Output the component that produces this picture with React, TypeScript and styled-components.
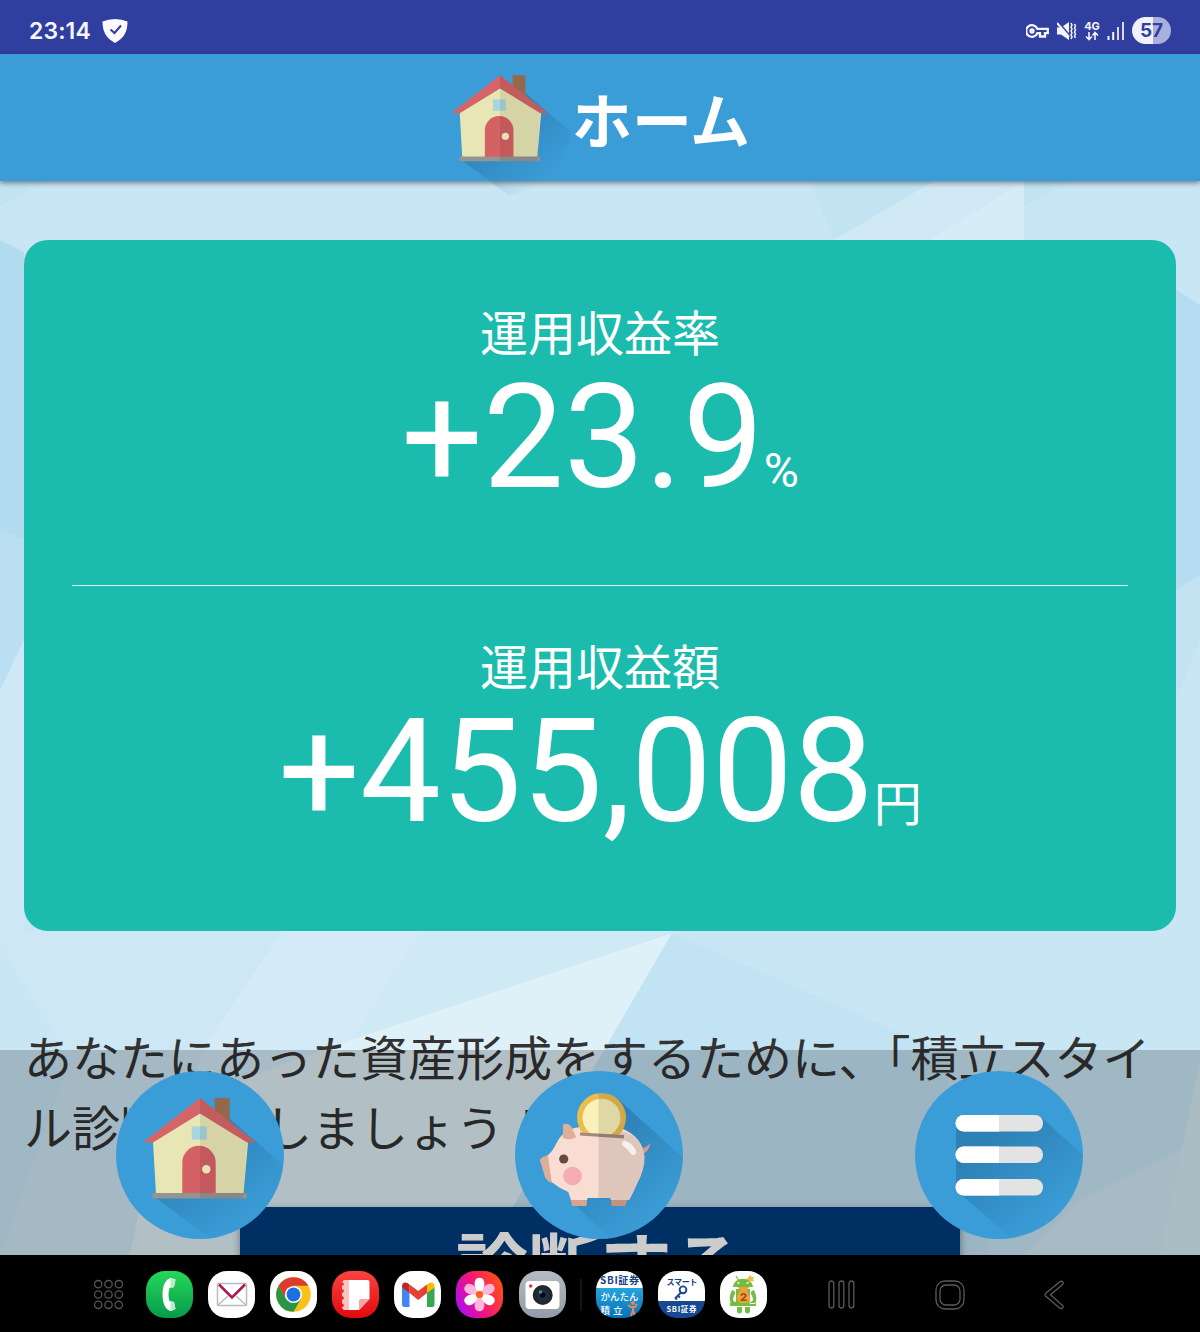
import React from 'react';
import styled, { createGlobalStyle } from 'styled-components';

const GlobalStyle = createGlobalStyle`
	* {
		box-sizing: border-box;
	}
	body {
		margin: 0;
		background: #000;
		font-family: Roboto, 'Noto Sans CJK JP', sans-serif;
	}
`;

const Screen = styled.div`
	display: flex;
	flex-direction: column;
	width: 1200px;
	height: 1332px;
	overflow: hidden;
`;

const StatusBar = styled.div`
	display: flex;
	align-items: center;
	justify-content: space-between;
	flex: none;
	height: 54px;
	padding: 7px 29px 0 29px;
	background: #303f9f;
	color: #f4f5fd;
`;

const StatusGroup = styled.div<{ $gap: number }>`
	display: flex;
	align-items: center;
	gap: ${({ $gap }) => $gap}px;
`;

const Clock = styled.span`
	font: 600 23px/28px Inter, sans-serif;
	letter-spacing: 0.1px;
`;

const Network = styled.div`
	display: flex;
	flex-direction: column;
	align-items: center;
	width: 16px;
	font: 700 11px/10px Inter, sans-serif;
`;

const Battery = styled.span`
	display: flex;
	align-items: center;
	justify-content: center;
	width: 39px;
	height: 27px;
	border-radius: 14px;
	background: linear-gradient(90deg, #f0f1fb 55%, #aab0dc 55%);
	color: #303f9f;
	font: 700 19px/27px Inter, sans-serif;
`;

const Header = styled.header`
	display: flex;
	align-items: center;
	justify-content: center;
	flex: none;
	position: relative;
	z-index: 2;
	height: 127px;
	padding-right: 22px;
	background: #3b9dd7;
	box-shadow: 0 2px 5px rgba(0, 0, 0, 0.45);
	color: #fff;
	svg {
		margin-top: 13px;
	}
`;

const HeaderTitle = styled.h1`
	margin: 0;
	font: 700 60px/84px 'Noto Sans CJK JP', sans-serif;
`;

const Main = styled.main`
	flex: 1;
	position: relative;
	overflow: hidden;
	padding: 59px 24px 0;
`;

const Backdrop = styled.svg`
	position: absolute;
	inset: 0;
	z-index: -1;
`;

const Card = styled.section`
	height: 691px;
	padding: 0 48px;
	border-radius: 24px;
	background: #1bbbad;
	color: #fff;
`;

const Result = styled.div`
	display: flex;
	flex-direction: column;
	align-items: center;
	height: 345px;
	padding-top: 56px;
	& + & {
		height: 346px;
		padding-top: 44px;
		border-top: 1px solid #e3f6f4;
	}
`;

const ResultLabel = styled.div`
	font: 400 48px/69px 'Noto Sans CJK JP', sans-serif;
`;

const ResultValue = styled.div`
	display: flex;
	align-items: baseline;
	font-size: 144px;
	line-height: 146px;
`;

const Unit = styled.small`
	font-size: 48px;
	line-height: 70px;
`;

const Lead = styled.p`
	margin: 89px 0 47px;
	color: #333;
	font: 400 48px/70px 'Noto Sans CJK JP', sans-serif;
`;

const DiagnoseButton = styled.button`
	display: block;
	width: 720px;
	height: 110px;
	margin: 0 auto;
	padding: 0;
	border: 0;
	background: #003d7c;
	box-shadow: 0 3px 8px rgba(0, 0, 0, 0.4);
	color: #fff;
	font: 700 72px/104px 'Noto Sans CJK JP', sans-serif;
`;

const BottomNav = styled.nav`
	position: absolute;
	right: 0;
	bottom: 0;
	left: 0;
	display: grid;
	grid-template-columns: repeat(3, 1fr);
	place-items: center;
	height: 205px;
	padding: 4px 1px 0 0;
	background: rgba(0, 0, 0, 0.2);
`;

const NavButton = styled.a`
	display: block;
	height: 168px;
`;

const Dock = styled.footer`
	display: flex;
	align-items: center;
	flex: none;
	height: 77px;
	padding: 2px 136px 0 93px;
	background: #000;
`;

const Apps = styled.div`
	display: flex;
	gap: 15.2px;
`;

const AppTile = styled.span<{ $bg?: string }>`
	display: block;
	width: 47px;
	height: 47px;
	overflow: hidden;
	border-radius: 19px;
	background: ${({ $bg }) => $bg || '#fff'};
	svg {
		display: block;
	}
`;

const DrawerIcon = styled.svg`
	margin-right: 21.5px;
`;

const DockLine = styled.span`
	width: 2px;
	height: 32px;
	margin: 0 14px;
	background: #151515;
`;

const SystemNav = styled.div`
	display: flex;
	align-items: center;
	justify-content: space-between;
	flex: 1;
	margin-left: 61px;
`;

const House = () => (
	<>
		<polygon points="114,48 172,98 172,172 98,170 40,127 84,90" fill="url(#shade)" clipPath="url(#disc)" />
		<rect x="98.7" y="27" width="15" height="30" fill="#93694b" />
		<path d="M84 42 132 71 127.5 123H40L37 71Z" fill="#e9e6b6" />
		<path d="M84 27 27 71.5H37L84 42.5 131 71.5H140Z" fill="#d46467" />
		<rect x="75.7" y="55.3" width="15" height="13.4" fill="#a9d6dc" />
		<path d="M66.3 123V91.5a16.7 16.7 0 0 1 33.4 0V123Z" fill="#d46164" />
		<path d="M36.5 122h94v5.5h-94Z" fill="#969493" />
		<path d="M84 27 140 71.5H131L127.5 127.5H84Z" fill="#000" opacity=".08" />
		<circle cx="90.3" cy="98.3" r="4.2" fill="#e6e3b4" />
	</>
);

const Pig = () => (
	<>
		<polygon points="104,29 172,90 172,172 96,168 60,134 84,70" fill="url(#shade)" clipPath="url(#disc)" />
		<path d="M125 78Q131 77 135.5 72Q134 81 126 84Z" fill="#d39c87" />
		<path d="M57 135 54 119H73L71.5 135ZM96.5 135 95 119H117L110 135Z" fill="#d8a48d" />
		<path d="M32 85Q38 80 41 73Q48 58 65 56Q85 52 106 57Q128 66 129.5 86Q130 98 122 113Q118 122 114 129H96L95 127H72.5L72 129H56L53.3 121Q44 117 36.5 111Z" fill="#f9ddd3" />
		<path d="M24.7 88.5Q28 85 33 84L36.7 112Q33 111 30 106Z" fill="#e0ae98" />
		<path d="M48 54Q51 51 56 55L61 66Q56 70 48 67Z" fill="#e0ae98" />
		<circle cx="86.5" cy="46.5" r="24.5" fill="#e9bd50" />
		<circle cx="86.5" cy="46.8" r="19" fill="#f9f1b9" />
		<path d="M65 63.5 109 67 115 78H62Z" fill="#f9ddd3" />
		<path d="M65 61.5 109 64V67.5L65 64.5Z" fill="#a6887e" />
		<path d="M83.5 22A24.5 24.5 0 0 1 107 60Q128 66 129.5 86Q130 98 122 113L110 135H96.5L95 127H83.5Z" fill="#000" opacity=".1" />
		<path d="M109.5 69.5Q119 73 121.5 81Q119.5 86 116 83Q113 78 107.5 74.5Q106 71 109.5 69.5Z" fill="#fff" opacity=".75" />
		<circle cx="48.7" cy="88" r="4.6" fill="#6b4a3e" />
		<circle cx="57.5" cy="105" r="9.3" fill="#f4abb3" />
	</>
);

const MenuBars = () => (
	<>
		<polygon points="41,52 126,46 172,88 172,172 98,168 44,122 41,116" fill="url(#shade)" clipPath="url(#disc)" />
		{[44, 75.5, 108].map(y => (
			<g key={y}>
				<rect x="40.7" y={y} width="87.3" height="16.5" rx="8" fill="#e3e3e3" />
				<path d={`M84 ${y}H48.7a8.25 8.25 0 0 0 0 16.5H84Z`} fill="#fff" />
			</g>
		))}
	</>
);

const RoundIcon = ({ children, size = 168, disc = true }: { children: React.ReactNode; size?: number; disc?: boolean }) => (
	<svg width={size} height={size} viewBox="0 0 168 168">
		<defs>
			<clipPath id="disc"><circle cx="84" cy="84" r="84" /></clipPath>
			<linearGradient id="shade" gradientUnits="userSpaceOnUse" x1="65" y1="75" x2="125" y2="150">
				<stop offset="0" stopColor="#1a5a86" stopOpacity=".42" />
				<stop offset="1" stopColor="#1a5a86" stopOpacity=".03" />
			</linearGradient>
		</defs>
		{disc && <circle cx="84" cy="84" r="84" fill="#3b9dd7" />}
		{children}
	</svg>
);

const Wallpaper = () => (
	<Backdrop width="1200" height="1074" viewBox="0 181 1200 1074">
		<rect y="181" width="1200" height="1074" fill="#c9e6f4" />
		<path d="M0 181H48L0 206ZM1024 181H1072L1024 206ZM810 181H934L834 240Z" fill="#c1e3f2" />
		<path d="M934 181H1024V240H834Z" fill="#d0e9f5" />
		<path d="M1024 181V240H930Z" fill="#d6ecf6" />
		<path d="M0 240 24 252V540L0 530Z" fill="#b4dcf1" />
		<path d="M0 530 24 540V655L0 690Z" fill="#bbdff2" />
		<path d="M0 690 24 640V931H0Z" fill="#cfe8f5" />
		<path d="M1176 290 1200 305V575L1176 590Z" fill="#b5dcf1" />
		<path d="M1176 590 1200 575V640L1176 700Z" fill="#c3e3f3" />
		<path d="M0 931H283L190 1075 150 1255H0Z" fill="#cde8f4" />
		<path d="M0 945 70 1060 0 1255Z" fill="#c9e6f4" />
		<path d="M283 931H672L345 1050 130 1255 205 1045Z" fill="#d4ebf7" />
		<path d="M420 931H672L345 1050Z" fill="#cfe9f5" />
		<path d="M672 933 345 1042 160 1110 130 1255H485L605 1050Z" fill="#dff1f8" />
		<path d="M672 933 485 1255H990L940 1050Z" fill="#c2e3f3" />
		<path d="M1200 1140 1080 1200 1024 1255H1200Z" fill="#d2e9f4" />
		<path d="M1200 931V1060L1160 1255H1200Z" fill="#d5ebf6" />
	</Backdrop>
);

const StatusIcons = () => (
	<StatusGroup $gap={7}>
		<svg width="24" height="18" viewBox="1 0 24 18" fill="none" stroke="#f4f5fd" strokeWidth="2.3">
			<path d="M12.3 6.8A5.8 5.8 0 1 0 12.3 11.2H15V14.5H20V11.2H22.8V6.8Z" />
			<circle cx="7" cy="9" r="1.5" />
		</svg>
		<svg width="20" height="20" viewBox="1 0 20 20" fill="#f4f5fd">
			<path d="M0 6.5H5L13 1V19L5 13.5H0Z" />
			<path d="m2 1 12 14" stroke="#303f9f" strokeWidth="2" />
			<path d="m1 2 12 14" stroke="#f4f5fd" strokeWidth="2" />
			<path d="m15 2 1 2-1 2 1 2-1 2 1 2-1 2 1 2-1 2M18.5 3l1 2-1 2 1 2-1 2 1 2-1 2 1 2" fill="none" stroke="#f4f5fd" strokeWidth="1.5" />
		</svg>
		<Network>
			4G
			<svg width="14" height="10" viewBox="0 0 14 10" fill="none" stroke="#f4f5fd" strokeWidth="1.6">
				<path d="M4 1V8.5M1 5.5 4 8.5 7 5.5M10 9V1.5M7.5 4.5 10 1.5 13 4.5" />
			</svg>
		</Network>
		<svg width="18" height="18" viewBox="0 0 18 18" stroke="#f4f5fd" strokeWidth="2">
			<path d="M1.5 14V18M6.2 10V18" />
			<path d="M11 5V18M16 0V18" strokeOpacity=".85" />
		</svg>
		<Battery>57</Battery>
	</StatusGroup>
);

const PhoneApp = () => (
	<AppTile $bg="linear-gradient(#25d85a, #079a4a)">
		<svg width="47" height="47" viewBox="0 0 47 47">
			<path d="M16.5 23.5C16.5 14 20 7.5 25 7L29.5 8.5 28 16 23.5 17Q21.5 23.5 23.5 30L28 31 29.5 38 25 40C20 39.5 16.5 33 16.5 23.5Z" fill="#fff" />
			<path d="m24.5 8 5 .5-1.5 7.5-3.500 1ZM24.500 30l3.500 1 1.500 7-5 1Z" fill="#b9ebca" />
		</svg>
	</AppTile>
);

const MailApp = () => (
	<AppTile>
		<svg width="47" height="47" viewBox="0 0 47 47" fill="none">
			<rect x="9.5" y="12.5" width="29" height="22" rx="1" stroke="#b9babd" strokeWidth="1.5" />
			<path d="m10 34 10-9M38 34 28 25" stroke="#b9babd" strokeWidth="1.3" />
			<path d="m11 13.5 13 13 13-13" stroke="#b5134b" strokeWidth="2.5" />
		</svg>
	</AppTile>
);

const ChromeApp = () => (
	<AppTile>
		<svg width="47" height="47" viewBox="-23.5 -23.5 47 47">
			<circle r="17.3" fill="#fbc116" />
			<path d="M-15 -8.65A17.3 17.3 0 0 1 15 -8.65L0 -8.65L-7.5 4.3Z" fill="#dc3b2d" />
			<path d="M-15 -8.65A17.3 17.3 0 0 0 0 17.3L7.5 4.3L-7.5 4.3Z" fill="#2a9447" />
			<circle r="8.6" fill="#fff" />
			<circle r="6.9" fill="#1b70e4" />
		</svg>
	</AppTile>
);

const NotesApp = () => (
	<AppTile $bg="linear-gradient(#fb4340, #e00a0d)">
		<svg width="47" height="47" viewBox="0 0 47 47">
			<path d="M12 9H35.5Q37.5 9 37.5 11V28L27 39H12Z" fill="#fff" />
			<path d="M12 9H17V39H12Q10 38 10 36Q14 35 10 32V29Q14 27 10 25V22Q14 20 10 18V15Q14 13 10 11Z" fill="#f9c3c4" />
			<path d="M27 39V30Q27 28 29 28H37.5Z" fill="#f5a5a6" />
		</svg>
	</AppTile>
);

const GmailApp = () => (
	<AppTile>
		<svg width="47" height="47" viewBox="0 0 47 47">
			<path d="M8 16 15.5 21V36H10.5Q8 36 8 33.5Z" fill="#4285f4" />
			<path d="M33 21 40.5 16V33.5Q40.5 36 38 36H33Z" fill="#34a853" />
			<path d="M15.5 13.5 24.2 20 33 13.5V22L24.2 29 15.5 22Z" fill="#e34133" />
			<path d="M8 15.5C8 11 12 10 15.5 13.5V22L8 16.5Z" fill="#c0261f" />
			<path d="M40.5 15.5C40.5 11 36.5 10 33 13.5V22L40.5 16.5Z" fill="#fbbc04" />
		</svg>
	</AppTile>
);

const GalleryApp = () => (
	<AppTile $bg="linear-gradient(65deg, #a80fff 5%, #f2127f 45%, #ff481f 85%)">
		<svg width="47" height="47" viewBox="-23.5 -23.5 47 47">
			{[60, 180, 300, 0, 120, 240].map((angle, i) => (
				<path key={angle} d="M-2 -3Q-6 -9 -4.6 -13A4.7 4.7 0 0 1 4.6 -13Q6 -9 2 -3Z" transform={`rotate(${angle})`} fill={i < 3 ? '#ffb5dc' : '#fff'} />
			))}
			<circle r="3.6" fill="#ff6416" />
		</svg>
	</AppTile>
);

const CameraApp = () => (
	<AppTile $bg="linear-gradient(#b4bbc4, #929ba7)">
		<svg width="47" height="47" viewBox="0 0 47 47">
			<rect x="6.5" y="10" width="34" height="28" rx="4" fill="#fff" />
			<circle cx="11.7" cy="15" r="1.7" fill="#e1303c" />
			<circle cx="23.7" cy="24" r="10" fill="#252629" />
			<circle cx="23.7" cy="24" r="5.5" fill="#17334f" />
			<circle cx="23.7" cy="24" r="2.8" fill="#08090c" />
			<circle cx="21.5" cy="21" r="1.7" fill="#3c94b7" />
		</svg>
	</AppTile>
);

const TsumitateApp = () => (
	<AppTile $bg="linear-gradient(#fff 36%, #25a5db 36%, #0870b8)">
		<svg width="47" height="47" viewBox="0 0 47 47" fontFamily="Noto Sans CJK JP, sans-serif" fontWeight="700" fill="#fff">
			<text x="4" y="12.5" textLength="39" fontSize="10" fill="#17417f">SBI証券</text>
			<text x="4.5" y="28.5" textLength="38" fontSize="9.5" fontWeight="500">かんたん</text>
			<text x="4.5" y="43" textLength="22" fontSize="9.5" fontWeight="500">積立</text>
			<circle cx="37" cy="32" r="2" fill="#e9865d" />
			<path d="m32 34 3 2h4l2-3M37 35v5M37 39l-2 6M37 39l2 6" stroke="#e9865d" strokeWidth="2" fill="none" />
		</svg>
	</AppTile>
);

const SmartApp = () => (
	<AppTile $bg="linear-gradient(#fff 64%, #174990 64%)">
		<svg width="47" height="47" viewBox="0 0 47 47" fontFamily="Noto Sans CJK JP, sans-serif" fontWeight="700">
			<text x="8.5" y="13.5" textLength="31" fontSize="8" fill="#17417f">スマート</text>
			<g fill="none" stroke="#174990" strokeWidth="1.9">
				<circle cx="25" cy="18.8" r="3.4" />
				<path d="m23 21.5-6 6M19.5 24.5l2.5 2M17 26.5l2 2" />
			</g>
			<text x="8.5" y="41" textLength="30" fontSize="7.5" fill="#fff">SBI証券</text>
		</svg>
	</AppTile>
);

const AndroidApp = () => (
	<AppTile>
		<svg width="47" height="47" viewBox="0 0 47 47" fill="#73bd45">
			<path d="m16 5 3 5M30 5l-3 5" stroke="#73bd45" strokeWidth="1.2" />
			<path d="M13 16C14 5 32 5 33 16ZM16 18H30V34H16ZM12 19Q17 20 14 25Q11 31 17 31V33H11Q8 27 12 19ZM34 19Q29 20 32 25Q35 31 29 31V33H35Q38 27 34 19ZM10 32H36V35H10ZM17 36h5v5q-2.5 3-5 0ZM25 36h5v5q-2.5 3-5 0Z" />
			<circle cx="18.5" cy="12" r="1" fill="#fff" />
			<circle cx="27.5" cy="12" r="1" fill="#fff" />
			<path d="m30 4 1.5 2 2.5 0-1 2 1 2.5-3-.5-2 2-.5-3-2-1.5 2.5-1Z" fill="#f8b93b" />
			<path d="M18 16h11l-2 4q7 9-1 12h-5q-8-3-1-12Z" fill="#f0a13c" />
			<text x="23.5" y="29.5" textAnchor="middle" fontFamily="Inter, sans-serif" fontSize="11" fontWeight="800" fill="#985014">2</text>
		</svg>
	</AppTile>
);

const App = () => {
	return (
		<Screen>
			<GlobalStyle />
			<StatusBar>
				<StatusGroup $gap={11}>
					<Clock>23:14</Clock>
					<svg width="26" height="24" viewBox="0 0 26 24">
						<path d="M13 0Q20 0 25.5 2.5C25.5 13 22 19 13 24C4 19 .5 13 .5 2.5Q6 0 13 0Z" fill="#fafaff" />
						<path d="m8.5 10.5 4 3.5 6.5-7.5" fill="none" stroke="#303f9f" strokeWidth="2" />
					</svg>
				</StatusGroup>
				<StatusIcons />
			</StatusBar>
			<Header>
				<RoundIcon size={144} disc={false}><House /></RoundIcon>
				<HeaderTitle>ホーム</HeaderTitle>
			</Header>
			<Main>
				<Wallpaper />
				<Card>
					<Result>
						<ResultLabel>運用収益率</ResultLabel>
						<ResultValue>+23.9<Unit>%</Unit></ResultValue>
					</Result>
					<Result>
						<ResultLabel>運用収益額</ResultLabel>
						<ResultValue>+455,008<Unit>円</Unit></ResultValue>
					</Result>
				</Card>
				<Lead>あなたにあった資産形成をするために、「積立スタイル診断」をしましょう！</Lead>
				<DiagnoseButton>診断する</DiagnoseButton>
				<BottomNav>
					<NavButton><RoundIcon><House /></RoundIcon></NavButton>
					<NavButton><RoundIcon><Pig /></RoundIcon></NavButton>
					<NavButton><RoundIcon><MenuBars /></RoundIcon></NavButton>
				</BottomNav>
			</Main>
			<Dock>
				<DrawerIcon width="31" height="31" viewBox="0 0 31 31" fill="none" stroke="#555" strokeWidth="1.3">
					{[5.2, 15.5, 25.8].map(y => [5.2, 15.5, 25.8].map(x => <circle key={`${x}-${y}`} cx={x} cy={y} r="3.7" />))}
				</DrawerIcon>
				<Apps>
					<PhoneApp />
					<MailApp />
					<ChromeApp />
					<NotesApp />
					<GmailApp />
					<GalleryApp />
					<CameraApp />
				</Apps>
				<DockLine />
				<Apps>
					<TsumitateApp />
					<SmartApp />
					<AndroidApp />
				</Apps>
				<SystemNav>
					<svg width="27" height="29" viewBox="0 0 27 29" fill="none" stroke="#5a5a5a" strokeWidth="1.3">
						<rect x="1" y="1" width="4.8" height="27" rx="2.4" />
						<rect x="11" y="1" width="4.8" height="27" rx="2.4" />
						<rect x="21" y="1" width="4.8" height="27" rx="2.4" />
					</svg>
					<svg width="30" height="30" viewBox="0 0 30 30" fill="none" stroke="#5a5a5a" strokeWidth="1.3">
						<rect x="1" y="1" width="28" height="28" rx="9" />
						<rect x="5" y="5" width="20" height="20" rx="6" />
					</svg>
					<svg width="20" height="30" viewBox="0 0 20 30" fill="none" stroke="#5a5a5a" strokeWidth="1.3">
						<path d="M18.5 1.5Q17 .5 15.5 2L1.5 13.5Q.5 15 1.5 16L15.5 28Q17 29 18.5 28Q20 26.5 18 25L6.5 14.8 18 5Q20 3 18.5 1.5Z" />
					</svg>
				</SystemNav>
			</Dock>
		</Screen>
	);
};

export default App;
